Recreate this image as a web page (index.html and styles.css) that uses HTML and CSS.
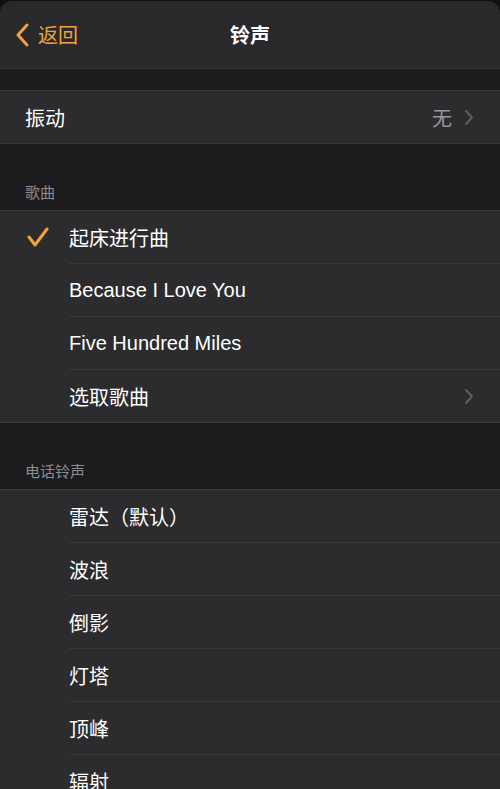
FILE: index.html
```html
<!DOCTYPE html>
<html lang="zh-CN">
<head>
    <meta charset="UTF-8">
    <meta name="viewport" content="width=device-width, initial-scale=1.0">
    <title>铃声</title>
    <link rel="stylesheet" href="styles.css">
</head>
<body>
    <div class="sheet">
        <!-- 导航栏 -->
        <div class="navbar">
            <a class="back" href="#">
                <svg width="14" height="24" viewBox="0 0 14 24"><polyline points="12,2 3,12 12,22" fill="none" stroke="currentColor" stroke-width="3" stroke-linecap="round" stroke-linejoin="round"/></svg>
                <span>返回</span>
            </a>
            <div class="title">铃声</div>
        </div>

        <div class="spacer"></div>

        <!-- 振动 -->
        <div class="group">
            <div class="cell">
                <span class="label">振动</span>
                <span class="value">无</span>
                <svg class="chevron" width="10" height="17" viewBox="0 0 10 17"><polyline points="2,2 8,8.5 2,15" fill="none" stroke="currentColor" stroke-width="2" stroke-linecap="round" stroke-linejoin="round"/></svg>
            </div>
        </div>

        <div class="section-title">歌曲</div>
        <div class="group">
            <div class="cell indented">
                <svg class="check" width="22" height="20" viewBox="0 0 22 20"><polyline points="2,10 8,18 20,2" fill="none" stroke="currentColor" stroke-width="3" stroke-linecap="round" stroke-linejoin="round"/></svg>
                <span class="label">起床进行曲</span>
            </div>
            <div class="cell indented"><span class="label">Because I Love You</span></div>
            <div class="cell indented"><span class="label">Five Hundred Miles</span></div>
            <div class="cell indented">
                <span class="label">选取歌曲</span>
                <svg class="chevron" width="10" height="17" viewBox="0 0 10 17"><polyline points="2,2 8,8.5 2,15" fill="none" stroke="currentColor" stroke-width="2" stroke-linecap="round" stroke-linejoin="round"/></svg>
            </div>
        </div>

        <div class="section-title">电话铃声</div>
        <div class="group">
            <div class="cell indented"><span class="label">雷达（默认）</span></div>
            <div class="cell indented"><span class="label">波浪</span></div>
            <div class="cell indented"><span class="label">倒影</span></div>
            <div class="cell indented"><span class="label">灯塔</span></div>
            <div class="cell indented"><span class="label">顶峰</span></div>
            <div class="cell indented"><span class="label">辐射</span></div>
        </div>
    </div>
</body>
</html>
```

FILE: styles.css
```css
body {
    margin: 0;
    background-color: #101011;
    font-family: "Liberation Sans", "Noto Sans CJK SC", sans-serif;
    color: #fff;
    overflow: hidden;
}

.sheet {
    margin-top: 1px;
    background-color: #1c1c1e;
    border-radius: 12px 12px 0 0;
    overflow: hidden;
    min-height: 800px;
}

/* 导航栏 */
.navbar {
    position: relative;
    height: 67px;
    background-color: #29292b;
    border-bottom: 1px solid #38383a;
    display: flex;
    align-items: center;
    justify-content: center;
}

.back {
    position: absolute;
    left: 15px;
    top: 0;
    bottom: 0;
    display: flex;
    align-items: center;
    gap: 9px;
    color: #f2a33a;
    text-decoration: none;
    font-size: 20px;
}

.title {
    font-size: 20px;
    font-weight: bold;
}

.spacer {
    height: 21px;
}

/* 列表 */
.group {
    background-color: #2c2c2e;
    border-top: 1px solid #3a3a3c;
    border-bottom: 1px solid #3a3a3c;
}

.cell {
    height: 52px;
    display: flex;
    align-items: center;
    padding: 0 26px 0 25px;
    font-size: 20px;
    position: relative;
}

/* 分隔线从文字处开始 */
.cell.indented {
    padding-left: 69px;
    height: 53px;
    background-image: linear-gradient(#3a3a3c, #3a3a3c);
    background-size: calc(100% - 69px) 1px;
    background-position: 69px 100%;
    background-repeat: no-repeat;
}

.cell.indented:last-child {
    background-image: none;
    height: 52px;
}

.label {
    flex: 1;
}

.value {
    color: #98989d;
    margin-right: 12px;
}

.chevron {
    color: #5e5e62;
}

.check {
    position: absolute;
    left: 27px;
    top: 16px;
    color: #f2a33a;
}

.section-title {
    height: 66px;
    box-sizing: border-box;
    display: flex;
    align-items: flex-end;
    padding: 0 25px 8px;
    font-size: 15px;
    color: #8d8d92;
}
```
